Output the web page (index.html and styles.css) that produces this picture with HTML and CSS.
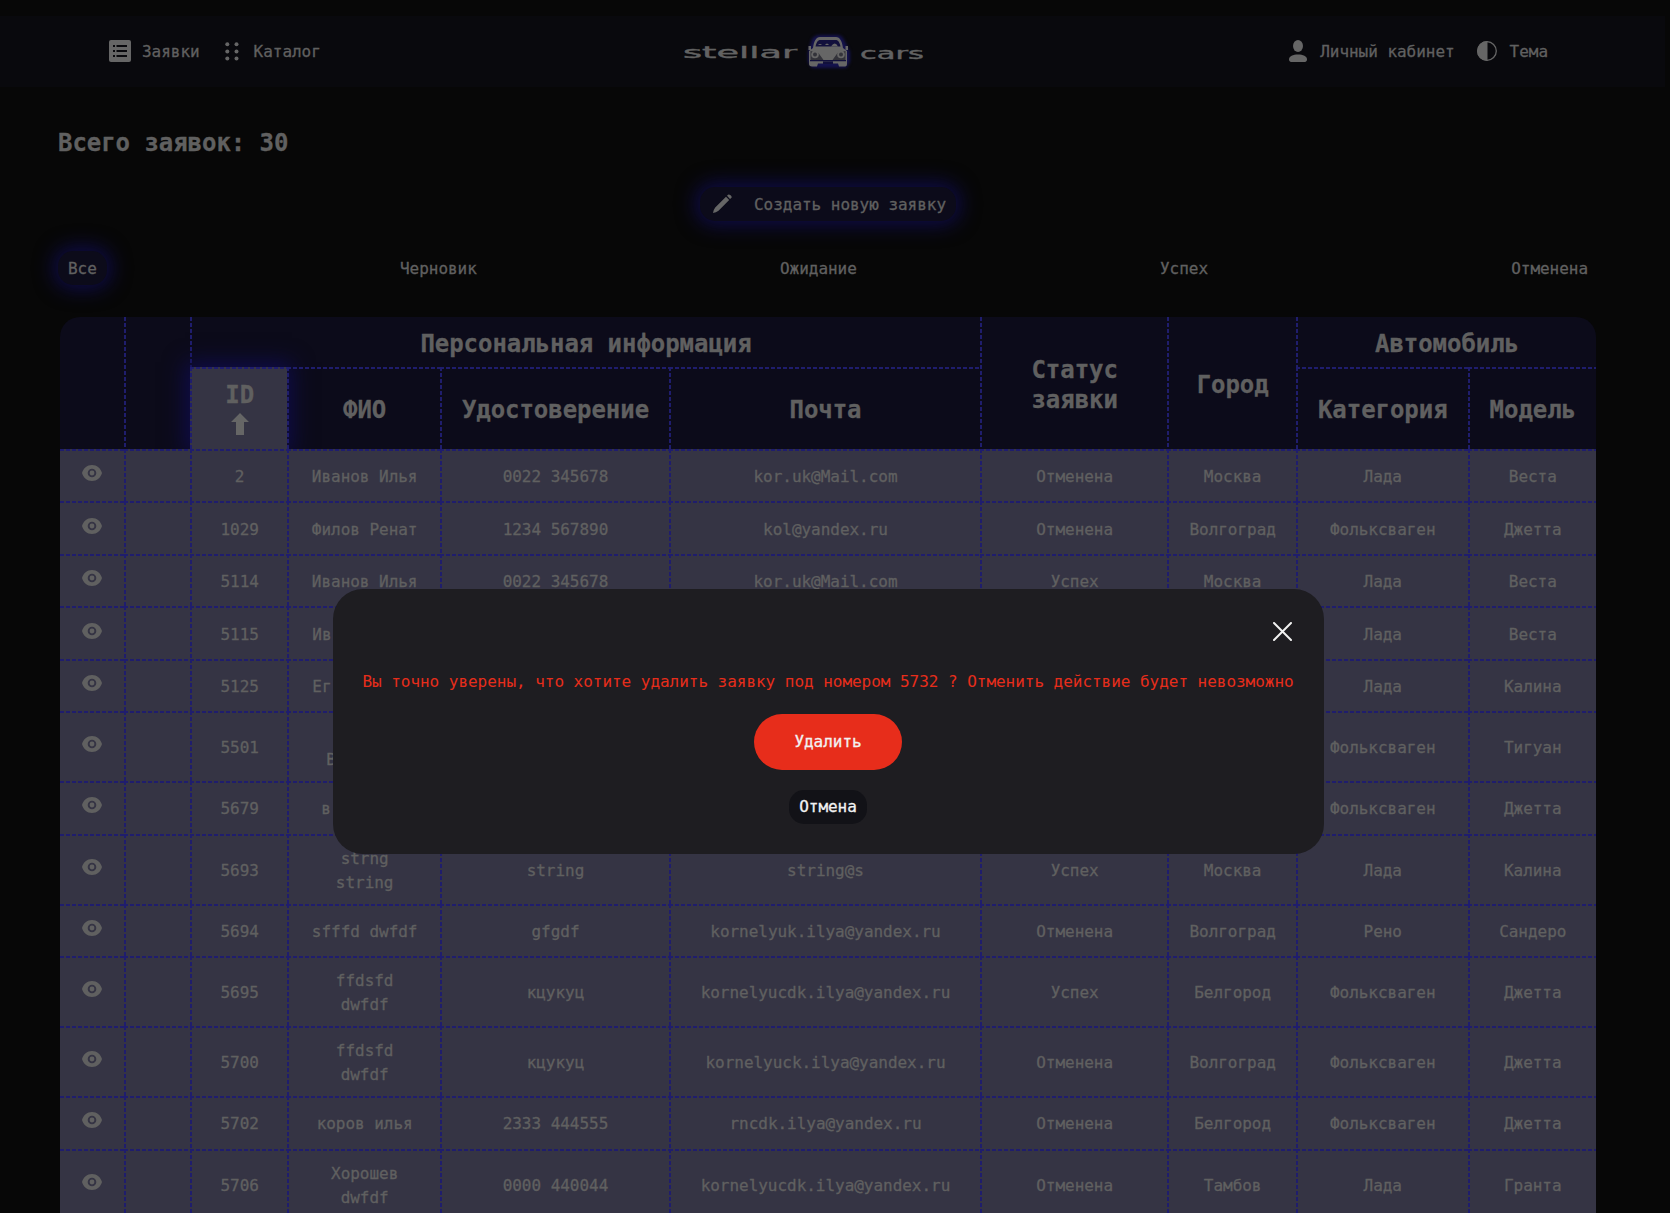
FILE: index.html
```html
<!DOCTYPE html>
<html lang="ru">
<head>
<meta charset="utf-8">
<title>Stellar Cars</title>
<link rel="stylesheet" href="styles.css">
</head>
<body>
<svg class="defs" width="0" height="0" aria-hidden="true">
  <symbol id="eye" viewBox="0 0 20 16"><path fill-rule="evenodd" d="M10 0C5 0 1.500 3.200 0 8c1.500 4.800 5 8 10 8s8.500-3.200 10-8c-1.500-4.800-5-8-10-8zm0 3.700a4.300 4.300 0 1 1 0 8.600 4.300 4.300 0 0 1 0-8.600zm0 1.900a2.400 2.400 0 1 0 0 4.800 2.400 2.400 0 0 0 0-4.800z"/></symbol>
</svg>
<header class="nav">
  <nav class="nav-group">
    <a class="nav-link"><svg width="22" height="22" viewBox="0 0 22 22"><rect width="22" height="22" rx="2"/><path class="cut" d="M4 6h2M7.500 6H18M4 11h2M7.500 11H18M4 16h2M7.500 16H18"/></svg><span>Заявки</span></a>
    <a class="nav-link catalog"><svg width="14" height="19" viewBox="0 0 14 19"><circle cx="2.300" cy="2.300" r="2"/><circle cx="11.500" cy="2.300" r="2"/><circle cx="2.300" cy="9.500" r="2"/><circle cx="11.500" cy="9.500" r="2"/><circle cx="2.300" cy="16.500" r="2"/><circle cx="11.500" cy="16.500" r="2"/></svg><span>Каталог</span></a>
  </nav>
  <svg class="logo" width="242" height="40" viewBox="0 0 242 40">
    <text x="-1" y="26" textLength="114" lengthAdjust="spacingAndGlyphs">stellar</text>
    <g class="car">
      <path class="halo" d="M128 7q3-4 8-4h17q5 0 7 5l6 12v10l-4 6h-34l-4-6V20z"/>
      <path d="M129 16c1-7 3-11 7-11h16c4 0 6 4 7 11l4 3v13c0 2-1 2.500-3 2.500h-5l-1-3h-20l-1 3h-5c-2 0-3-1-3-2.500V19z"/>
      <path class="dark" d="M131.500 14.500c1-4 2-6.500 5-6.500h15c3 0 4 2.500 5 6.500z"/>
      <path d="M134 13q2-2 4 0zM141 13q2-3 4 0zM147 14.500q4-6 7 0z"/>
      <path class="shade" d="M126.500 19l8 2 5 7h-13zM161.500 19l-8 2-5 7h13z"/>
      <circle cx="131" cy="22.500" r="3.800"/><circle cx="157" cy="22.500" r="3.800"/>
      <circle class="shade" cx="131" cy="22.500" r="2"/><circle class="shade" cx="157" cy="22.500" r="2"/>
      <path class="dark" d="M126 28h36v1.200h-36zM139 29.500h10v2.500h-10z"/>
      <path d="M124.500 14h2.500v4h-2.500zM161.500 14h2.500v4h-2.500z"/>
    </g>
    <text x="176" y="27" textLength="64" lengthAdjust="spacingAndGlyphs">cars</text>
  </svg>
  <nav class="nav-group right">
    <a class="nav-link account"><svg width="18" height="22" viewBox="0 0 18 22"><ellipse cx="9" cy="6" rx="5" ry="6"/><path d="M0 19.500C0 16 4 14.500 9 14.500s9 1.500 9 5c0 2-1.500 2.500-3 2.500H3c-1.500 0-3-.5-3-2.500z"/></svg><span>Личный кабинет</span></a>
    <a class="nav-link theme"><svg width="20" height="20" viewBox="0 0 20 20"><circle class="ring" cx="10" cy="10" r="9.300"/><path d="M10.500 0H10a10 10 0 0 0 0 20h.5z"/></svg><span>Тема</span></a>
  </nav>
</header>
<main class="page">
  <h2 class="total">Всего заявок: 30</h2>
  <button class="pill create glow"><svg width="19" height="19" viewBox="0 0 19 19"><path d="M13 2.800 16.200 6 5.500 16.800Q3 18.800 0 19q.3-3 2.200-5.500zM14 1.800l1-1Q16 0 17.200 1q2 1.300 1.300 2.700L17 5z"/></svg>Создать новую заявку</button>
  <div class="tabs">
    <button class="pill glow">Все</button>
    <button class="pill">Черновик</button>
    <button class="pill">Ожидание</button>
    <button class="pill">Успех</button>
    <button class="pill">Отменена</button>
  </div>
  <div class="table-frame">
  <table class="orders">
    <colgroup><col class="c1"><col class="c2"><col class="c3"><col class="c4"><col class="c5"><col class="c6"><col class="c7"><col class="c8"><col class="c9"><col class="c10"></colgroup>
    <thead>
      <tr class="head-top"><th rowspan="2"></th><th rowspan="2"></th><th colspan="4">Персональная информация</th><th rowspan="2">Статус<br>заявки</th><th rowspan="2">Город</th><th colspan="2">Автомобиль</th></tr>
      <tr class="head-sub"><th class="sorted">ID<svg width="18" height="22" viewBox="0 0 18 22"><path d="M9 0l9 9h-5v13H5V9H0z"/></svg></th><th>ФИО</th><th>Удостоверение</th><th>Почта</th><th>Категория</th><th>Модель</th></tr>
    </thead>
    <tbody>
      <tr><td><svg class="eye"><use href="#eye"/></svg></td><td></td><td>2</td><td>Иванов Илья</td><td>0022 345678</td><td>kor.uk@Mail.com</td><td>Отменена</td><td>Москва</td><td>Лада</td><td>Веста</td></tr>
      <tr><td><svg class="eye"><use href="#eye"/></svg></td><td></td><td>1029</td><td>Филов Ренат</td><td>1234 567890</td><td>kol@yandex.ru</td><td>Отменена</td><td>Волгоград</td><td>Фольксваген</td><td>Джетта</td></tr>
      <tr><td><svg class="eye"><use href="#eye"/></svg></td><td></td><td>5114</td><td>Иванов Илья</td><td>0022 345678</td><td>kor.uk@Mail.com</td><td>Успех</td><td>Москва</td><td>Лада</td><td>Веста</td></tr>
      <tr><td><svg class="eye"><use href="#eye"/></svg></td><td></td><td>5115</td><td class="short">Ив</td><td></td><td></td><td></td><td></td><td>Лада</td><td>Веста</td></tr>
      <tr><td><svg class="eye"><use href="#eye"/></svg></td><td></td><td>5125</td><td class="short">Ег</td><td></td><td></td><td></td><td></td><td>Лада</td><td>Калина</td></tr>
      <tr class="tall"><td><svg class="eye"><use href="#eye"/></svg></td><td></td><td>5501</td><td class="short second-line">&nbsp;<br>В</td><td></td><td></td><td></td><td></td><td>Фольксваген</td><td>Тигуан</td></tr>
      <tr><td><svg class="eye"><use href="#eye"/></svg></td><td></td><td>5679</td><td class="short nine">в</td><td></td><td></td><td></td><td></td><td>Фольксваген</td><td>Джетта</td></tr>
      <tr class="tall"><td><svg class="eye"><use href="#eye"/></svg></td><td></td><td>5693</td><td>strng<br>string</td><td>string</td><td>string@s</td><td>Успех</td><td>Москва</td><td>Лада</td><td>Калина</td></tr>
      <tr><td><svg class="eye"><use href="#eye"/></svg></td><td></td><td>5694</td><td>sfffd dwfdf</td><td>gfgdf</td><td>kornelyuk.ilya@yandex.ru</td><td>Отменена</td><td>Волгоград</td><td>Рено</td><td>Сандеро</td></tr>
      <tr class="tall"><td><svg class="eye"><use href="#eye"/></svg></td><td></td><td>5695</td><td>ffdsfd<br>dwfdf</td><td>кцукуц</td><td>kornelyucdk.ilya@yandex.ru</td><td>Успех</td><td>Белгород</td><td>Фольксваген</td><td>Джетта</td></tr>
      <tr class="tall"><td><svg class="eye"><use href="#eye"/></svg></td><td></td><td>5700</td><td>ffdsfd<br>dwfdf</td><td>кцукуц</td><td>kornelyuck.ilya@yandex.ru</td><td>Отменена</td><td>Волгоград</td><td>Фольксваген</td><td>Джетта</td></tr>
      <tr><td><svg class="eye"><use href="#eye"/></svg></td><td></td><td>5702</td><td>коров илья</td><td>2333 444555</td><td>rncdk.ilya@yandex.ru</td><td>Отменена</td><td>Белгород</td><td>Фольксваген</td><td>Джетта</td></tr>
      <tr class="tall"><td><svg class="eye"><use href="#eye"/></svg></td><td></td><td>5706</td><td>Хорошев<br>dwfdf</td><td>0000 440044</td><td>kornelyucdk.ilya@yandex.ru</td><td>Отменена</td><td>Тамбов</td><td>Лада</td><td>Гранта</td></tr>
    </tbody>
  </table>
  </div>
</main>
<div class="modal" role="dialog">
  <button class="close" aria-label="Закрыть"><svg width="19" height="19" viewBox="0 0 19 19"><path d="M1 1l17 17M18 1 1 18"/></svg></button>
  <p class="warning">Вы точно уверены, что хотите удалить заявку под номером 5732 ? Отменить действие будет невозможно</p>
  <button class="delete">Удалить</button>
  <button class="pill cancel">Отмена</button>
</div>
</body>
</html>
```
FILE: styles.css
```css
* { box-sizing: border-box; }
html, body { height: 100%; overflow: hidden; }
body {
  margin: 0;
  padding-top: 16px;
  background: #070707;
  color: #606060;
  font: 16px/24px "DejaVu Sans Mono", "Liberation Mono", monospace;
  letter-spacing: -0.033px;
  -webkit-text-stroke: 0.3px;
}
svg { display: block; flex: none; fill: #666; }
.defs { position: absolute; }
button { border: 0; background: none; color: inherit; font: inherit; letter-spacing: inherit; }

.nav {
  display: flex;
  align-items: center;
  width: 1665px;
  height: 71px;
  padding: 0 117px 0 109px;
  background: #09090d;
}
.nav-group { display: flex; flex: none; width: 575px; padding-bottom: 1px; }
.nav-group.right { margin-left: auto; width: auto; gap: 22px; }
.nav-link { display: flex; align-items: center; gap: 11px; }
.nav-link span { padding-top: 2px; }
.catalog { margin-left: 25px; gap: 15px; }
.account, .theme { gap: 13px; }
.cut { stroke: #09090d; stroke-width: 1.8; }
.ring { fill: none; stroke: #666; stroke-width: 1.3; }
.logo { overflow: visible; }
.logo text { font: 16.500px "DejaVu Sans", sans-serif; letter-spacing: 0; fill: #626262; stroke: #626262; stroke-width: 0.4px; }
.halo { fill: #14124d; filter: blur(1.500px); }
.dark { fill: #12103c; }
.shade { fill: #33333a; }

.page { padding: 0 72px 0 58px; }
.total { margin: 39px 0 0; font-size: 24px; line-height: 34px; letter-spacing: -0.05px; }
.pill {
  display: flex;
  align-items: center;
  height: 34px;
  padding: 2px 10px 0;
  border-radius: 15px;
}
.glow { background: #0c0b1a; box-shadow: 0 0 20px 4px #0f0c4a; }
.create { margin: 27px auto 0; padding-left: 13px; gap: 22px; }
.create svg { margin-top: -3px; }
.tabs { display: flex; justify-content: space-between; margin-top: 30px; }

.table-frame {
  width: 1536px;
  margin: 32px 0 0 2px;
  border-radius: 20px 20px 0 0;
  overflow: hidden;
}
.orders {
  width: 1536px;
  table-layout: fixed;
  border-collapse: separate;
  border-spacing: 0;
  text-align: center;
}
.c1 { width: 64px; }
.c2 { width: 66px; }
.c3 { width: 97.300px; }
.c4 { width: 152.700px; }
.c5 { width: 229px; }
.c6 { width: 311px; }
.c7 { width: 187.400px; }
.c8 { width: 128.600px; }
.c9 { width: 171.600px; }
.c10 { width: 128.400px; }
.orders thead { background: #0c0b1a; }
/* 4px dashes with 2px gaps along the left and top edge of each cell */
.orders th, .orders td {
  --left: repeating-linear-gradient(#1f1d6d 0 4px, transparent 4px 6px) 0 0 / 2px 100% no-repeat;
  --top: repeating-linear-gradient(90deg, #1f1d6d 0 4px, transparent 4px 6px) 0 0 / 100% 2px no-repeat;
  padding: 4px 0 0 2px;
  background: var(--left), var(--top);
}
.orders th { font-size: 24px; line-height: 30px; letter-spacing: -0.05px; }
.orders .head-top th { background: var(--left); }
.orders td { background: var(--left), var(--top), #353444; }
.orders tr > :first-child { padding-left: 0; }
.orders .head-top > :first-child { background: none; }
.orders tbody tr > :first-child { background: var(--top), #353444; }
.head-top { height: 50px; }
.head-sub { height: 82px; }
.orders .head-sub .sorted {
  padding: 0 0 1px 2px;
  background: var(--left), var(--top), #353444;
  box-shadow: 0 0 20px 5px #0f0c4a;
}
.sorted svg { margin: 3px auto 0; }
tbody tr { height: 52.450px; }
tbody .tall { height: 70px; }
.orders .short { padding-left: 25px; text-align: left; }
.orders .second-line { padding-left: 39px; }
.orders .nine { padding-left: 34px; }
.eye { width: 20px; height: 16px; margin: -8px auto 0; fill: #606060; }

.modal {
  position: absolute;
  z-index: 2;
  top: 588.500px;
  left: 332.500px;
  display: flex;
  flex-direction: column;
  align-items: center;
  width: 991px;
  height: 265px;
  padding: 33px 30px 30px;
  border-radius: 30px;
  background: #1e1d21;
  color: #f2f2f2;
}
.close { align-self: flex-end; margin-right: 2px; padding: 0; }
.close path { stroke: #f2f2f2; stroke-width: 2; stroke-linecap: round; }
.warning { margin: 29px 0 20px; color: #e72d1b; white-space: nowrap; -webkit-text-stroke: 0; }
.delete { flex: none; width: 148px; height: 56px; padding-top: 2px; border-radius: 28px; background: #e72d1b; }
.cancel { flex: none; margin-top: 20px; padding-top: 1px; background: #121217; }
```
